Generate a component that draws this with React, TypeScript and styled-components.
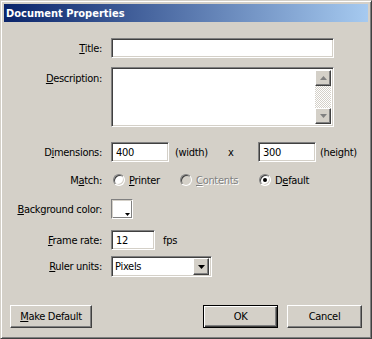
import React from "react";
import styled, { createGlobalStyle, css } from "styled-components";

const Global = createGlobalStyle`
  html, body { margin: 0; padding: 0; background: #d4d0c8; }
  body {
    font-family: "DejaVu Sans Condensed", "DejaVu Sans", "Liberation Sans", sans-serif;
    font-size: 11px;
    letter-spacing: -0.3px;
    color: #000;
  }
  * { box-sizing: border-box; }
`;

const raised = css`
  background: #d4d0c8;
  border: 1px solid;
  border-color: #fff #404040 #404040 #fff;
  box-shadow: inset -1px -1px 0 #808080, inset 1px 1px 0 #d4d0c8;
`;

const sunken = css`
  background: #fff;
  border: 1px solid;
  border-color: #808080 #fff #fff #808080;
  box-shadow: inset 1px 1px 0 #404040, inset -1px -1px 0 #d4d0c8;
`;

const Window = styled.div`
  width: 372px;
  height: 339px;
  background: #d4d0c8;
  border: 1px solid;
  border-color: #d4d0c8 #404040 #404040 #d4d0c8;
  box-shadow: inset 1px 1px 0 #fff, inset -1px -1px 0 #808080;
  padding: 3px;
  display: flex;
  flex-direction: column;
`;

const TitleBar = styled.div`
  height: 18px;
  flex: none;
  display: flex;
  align-items: center;
  padding-left: 2px;
  background: linear-gradient(to right, #0a246a, #a6caf0);
  color: #fff;
  font-weight: bold;
  font-size: 11px;
  letter-spacing: 0;
`;

const Form = styled.div`
  display: flex;
  flex-direction: column;
`;

const Row = styled.div<{ $mt: number; $top?: boolean }>`
  display: grid;
  grid-template-columns: 98px auto;
  column-gap: 9px;
  margin-top: ${(p) => p.$mt}px;
  align-items: ${(p) => (p.$top ? "start" : "center")};
`;

const Label = styled.div<{ $pt?: number }>`
  text-align: right;
  white-space: nowrap;
  padding-top: ${(p) => p.$pt ?? 0}px;
`;

const Field = styled.div`
  display: flex;
  align-items: center;
  white-space: nowrap;
`;

const TextInput = styled.input<{ $w: number }>`
  ${sunken};
  width: ${(p) => p.$w}px;
  height: 20px;
  padding: 0 0 0 4px;
  font: inherit;
  letter-spacing: inherit;
  color: #000;
  outline: none;
`;

const TextArea = styled.div`
  ${sunken};
  width: 223px;
  height: 60px;
  padding: 2px;
  display: flex;
  justify-content: flex-end;
`;

const ScrollBar = styled.div`
  width: 16px;
  display: flex;
  flex-direction: column;
`;

const ScrollBtn = styled.div`
  ${raised};
  width: 16px;
  height: 16px;
  flex: none;
  display: flex;
  align-items: center;
  justify-content: center;
`;

const Track = styled.div`
  flex: 1;
  background: repeating-conic-gradient(#d4d0c8 0 25%, #fff 0 50%) 0 0 / 2px 2px;
`;

const Cell = styled.span<{ $w?: number; $ml?: number }>`
  display: inline-block;
  width: ${(p) => (p.$w ? `${p.$w}px` : "auto")};
  margin-left: ${(p) => p.$ml ?? 0}px;
`;

const Options = styled.div`
  display: flex;
  align-items: center;
  padding-left: 2px;
  height: 16px;
`;

const Option = styled.div<{ $w?: number }>`
  display: flex;
  align-items: center;
  width: ${(p) => (p.$w ? `${p.$w}px` : "auto")};
`;

const RadioDot = styled.span<{ $checked?: boolean; $disabled?: boolean }>`
  position: relative;
  width: 12px;
  height: 12px;
  border-radius: 50%;
  border: 1px solid;
  border-color: #808080 #fff #fff #808080;
  box-shadow: inset 1px 1px 0 #404040, inset -1px -1px 0 #d4d0c8;
  background: ${(p) => (p.$disabled ? "#d4d0c8" : "#fff")};
  flex: none;
  &::after {
    content: "";
    display: ${(p) => (p.$checked ? "block" : "none")};
    position: absolute;
    left: 3px;
    top: 3px;
    width: 4px;
    height: 4px;
    border-radius: 50%;
    background: #000;
  }
`;

const OptionText = styled.span<{ $disabled?: boolean }>`
  margin-left: 4px;
  color: ${(p) => (p.$disabled ? "#808080" : "#000")};
  text-shadow: ${(p) => (p.$disabled ? "1px 1px 0 #fff" : "none")};
`;

const Swatch = styled.div`
  position: relative;
  width: 22px;
  height: 20px;
  background: #fff;
  border: 1px solid;
  border-color: #808080 #fff #fff #808080;
  box-shadow: inset 1px 1px 0 #d4d0c8, inset -1px -1px 0 #808080;
`;

const SwatchArrow = styled.svg`
  position: absolute;
  right: 2px;
  bottom: 2px;
`;

const Select = styled.div`
  ${sunken};
  width: 101px;
  height: 21px;
  padding: 2px;
  display: flex;
  align-items: center;
`;

const SelectText = styled.span`
  flex: 1;
  padding-left: 1px;
`;

const SelectBtn = styled.div`
  ${raised};
  width: 16px;
  height: 17px;
  display: flex;
  align-items: center;
  justify-content: center;
`;

const Footer = styled.div`
  margin-top: auto;
  display: flex;
  justify-content: space-between;
  padding: 0 6px 7px 6px;
`;

const Group = styled.div`
  display: flex;
  gap: 9px;
`;

const Button = styled.button<{ $w: number; $default?: boolean }>`
  width: ${(p) => p.$w}px;
  height: 23px;
  font: inherit;
  letter-spacing: inherit;
  color: #000;
  padding: 0;
  background: #d4d0c8;
  ${(p) =>
    p.$default
      ? css`
          border: 1px solid #000;
          box-shadow: inset 1px 1px 0 #fff, inset -1px -1px 0 #404040,
            inset -2px -2px 0 #808080;
        `
      : css`
          border: 1px solid;
          border-color: #fff #404040 #404040 #fff;
          box-shadow: inset -1px -1px 0 #808080, inset 1px 1px 0 #d4d0c8;
        `}
`;

const Arrow = ({ up, color }: { up?: boolean; color: string }) => (
  <svg width="7" height="4" viewBox="0 0 7 4">
    {up ? (
      <path d="M3.5 0 L7 4 L0 4 Z" fill={color} />
    ) : (
      <path d="M0 0 L7 0 L3.5 4 Z" fill={color} />
    )}
  </svg>
);

export default function App() {
  return (
    <>
      <Global />
      <Window>
        <TitleBar>Document Properties</TitleBar>
        <Form>
          <Row $mt={16}>
            <Label>
              <u>T</u>itle:
            </Label>
            <TextInput $w={223} defaultValue="" readOnly />
          </Row>
          <Row $mt={9} $top>
            <Label $pt={5}>
              <u>D</u>escription:
            </Label>
            <TextArea>
              <ScrollBar>
                <ScrollBtn>
                  <Arrow up color="#808080" />
                </ScrollBtn>
                <Track />
                <ScrollBtn>
                  <Arrow color="#808080" />
                </ScrollBtn>
              </ScrollBar>
            </TextArea>
          </Row>
          <Row $mt={15}>
            <Label>
              D<u>i</u>mensions:
            </Label>
            <Field>
              <TextInput $w={58} defaultValue="400" readOnly />
              <Cell $w={53} $ml={6}>
                (width)
              </Cell>
              <Cell $w={30}>x</Cell>
              <TextInput $w={58} defaultValue="300" readOnly />
              <Cell $ml={4}>(height)</Cell>
            </Field>
          </Row>
          <Row $mt={10}>
            <Label>
              M<u>a</u>tch:
            </Label>
            <Options>
              <Option $w={67}>
                <RadioDot />
                <OptionText>
                  <u>P</u>rinter
                </OptionText>
              </Option>
              <Option $w={79}>
                <RadioDot $disabled />
                <OptionText $disabled>
                  <u>C</u>ontents
                </OptionText>
              </Option>
              <Option>
                <RadioDot $checked />
                <OptionText>
                  D<u>e</u>fault
                </OptionText>
              </Option>
            </Options>
          </Row>
          <Row $mt={11}>
            <Label>
              <u>B</u>ackground color:
            </Label>
            <Field>
              <Swatch>
                <SwatchArrow width="5" height="3" viewBox="0 0 5 3">
                  <path d="M0 0 L5 0 L2.5 3 Z" fill="#000" />
                </SwatchArrow>
              </Swatch>
            </Field>
          </Row>
          <Row $mt={11}>
            <Label>
              <u>F</u>rame rate:
            </Label>
            <Field>
              <TextInput $w={44} defaultValue="12" readOnly />
              <Cell $ml={8}>fps</Cell>
            </Field>
          </Row>
          <Row $mt={6}>
            <Label>
              <u>R</u>uler units:
            </Label>
            <Select>
              <SelectText>Pixels</SelectText>
              <SelectBtn>
                <Arrow color="#000" />
              </SelectBtn>
            </Select>
          </Row>
        </Form>
        <Footer>
          <Button $w={82}>
            <u>M</u>ake Default
          </Button>
          <Group>
            <Button $w={75} $default>
              OK
            </Button>
            <Button $w={75}>Cancel</Button>
          </Group>
        </Footer>
      </Window>
    </>
  );
}
